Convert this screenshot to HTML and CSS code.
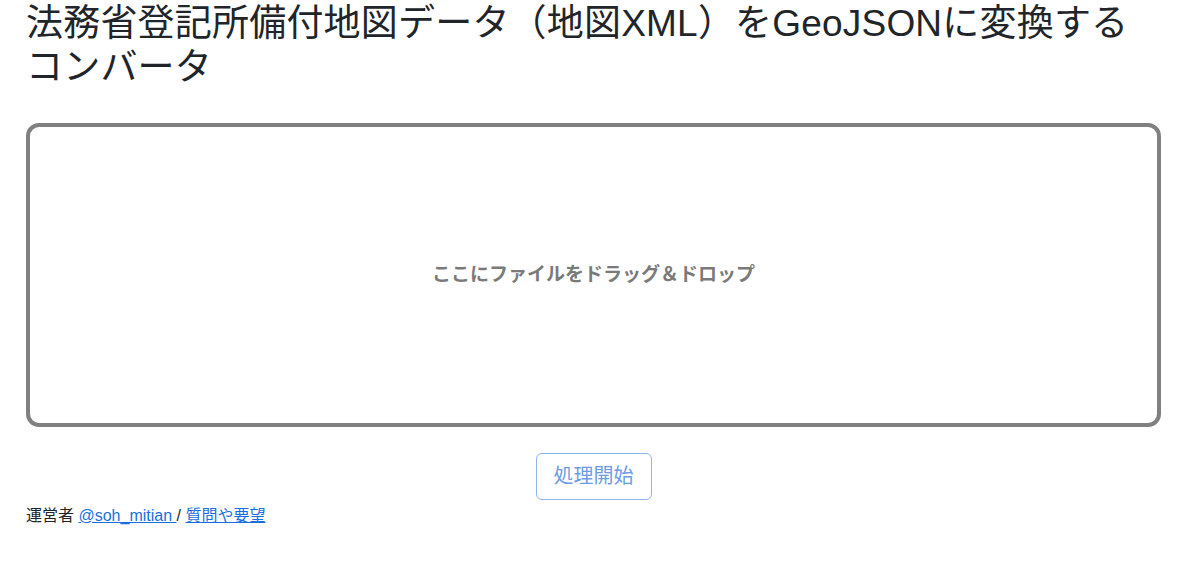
FILE: index.html
```html
<!DOCTYPE html>
<html lang="ja">
<head>
<meta charset="utf-8">
<title>地図XML to GeoJSON</title>
<link rel="stylesheet" href="styles.css">
</head>
<body>
<main class="container">
  <h1 class="title">法務省登記所備付地図データ（地図XML）をGeoJSONに変換するコンバータ</h1>
  <div class="dropzone">
    <p class="dropzone-text">ここにファイルをドラッグ＆ドロップ</p>
  </div>
  <div class="actions">
    <button class="btn-start" type="button" disabled>処理開始</button>
  </div>
  <footer class="footer">運営者 <a href="#">@soh_mitian </a>/ <a href="#">質問や要望</a></footer>
</main>
</body>
</html>
```

FILE: styles.css
```css
html, body {
  margin: 0;
  padding: 0;
  background: #fff;
}
body {
  font-family: "Liberation Sans", "Noto Sans CJK JP", sans-serif;
  color: #212529;
  font-size: 16px;
  line-height: 1.5;
}
.container {
  margin-left: 26px;
  width: 1135px;
}
.title {
  margin: 0;
  max-width: 1120px;
  padding-top: 2px;
  font-size: 37px;
  font-weight: 400;
  line-height: 1.2;
  letter-spacing: 0.2px;
}
.dropzone {
  margin-top: 32px;
  box-sizing: border-box;
  height: 304px;
  border: 4px solid #808080;
  border-radius: 13px;
  display: flex;
  align-items: center;
  justify-content: center;
}
.dropzone-text {
  margin: 0;
  font-size: 19px;
  font-weight: 700;
  color: #7a7a7a;
}
.actions {
  display: flex;
  justify-content: center;
  margin-top: 26px;
}
.btn-start {
  font-family: "Liberation Sans", "Noto Sans CJK JP", sans-serif;
  font-size: 20px;
  line-height: 29px;
  padding: 8px 17px;
  background: #fff;
  color: #6e9ce3;
  border: 1px solid #8fb3ec;
  border-radius: 6px;
}
.footer {
  margin-top: 4px;
  font-size: 16px;
  line-height: 24px;
  color: #212529;
}
.footer a {
  color: #1a6fe0;
  text-decoration: underline;
}
```
